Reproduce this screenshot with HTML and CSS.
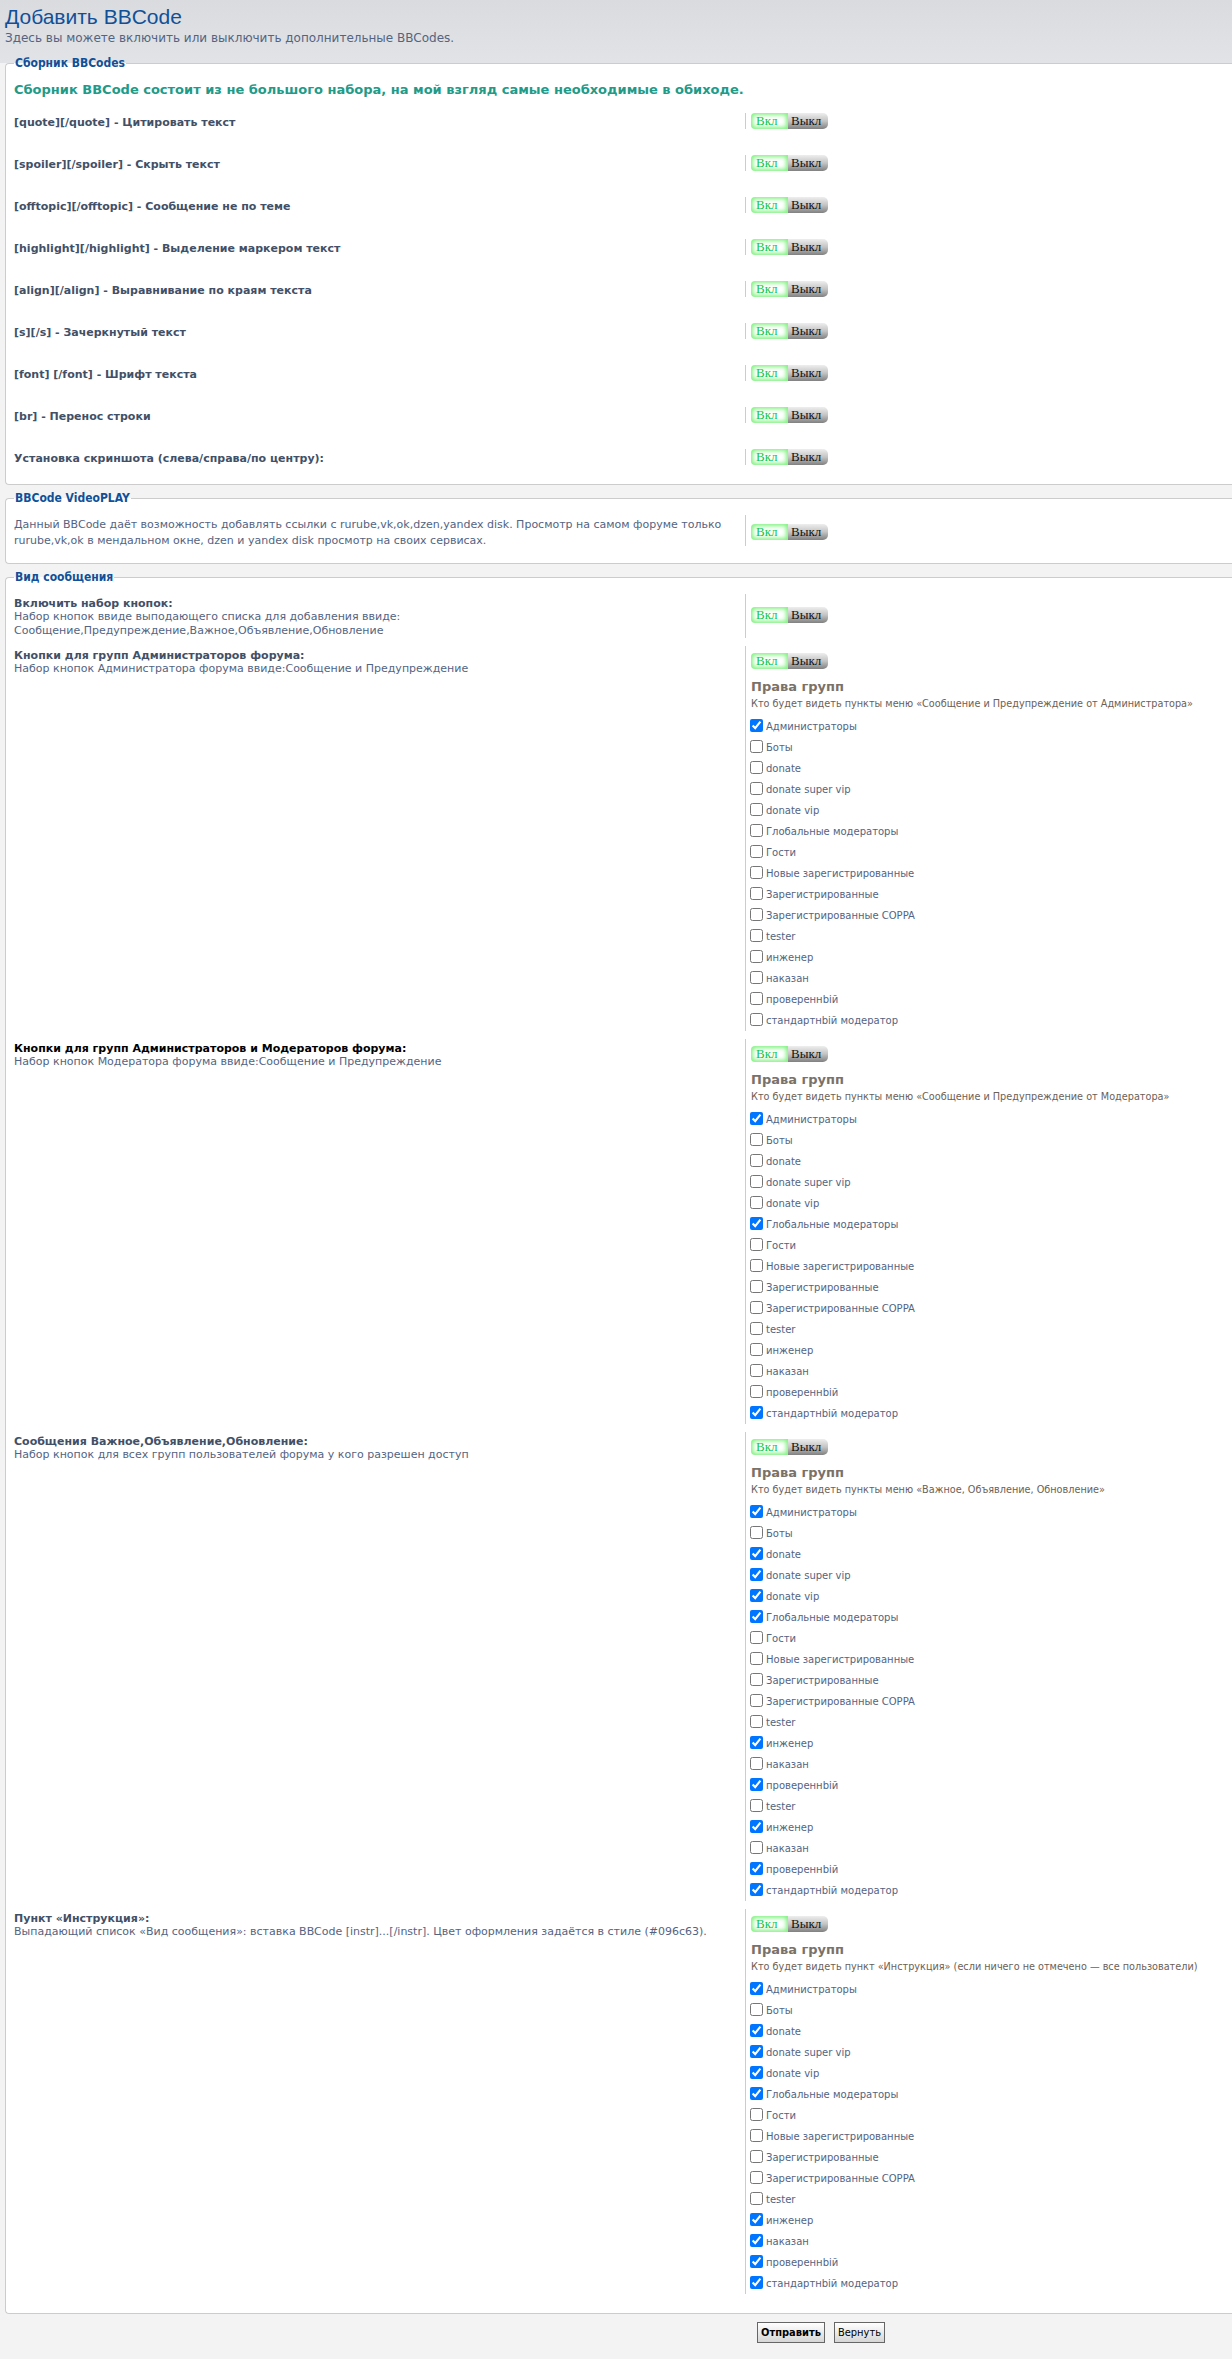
FILE: index.html
```html
<!DOCTYPE html>
<html lang="ru">
<head>
  <meta charset="UTF-8">
  <title>Добавить BBCode</title>
  <link rel="stylesheet" href="styles.css">
</head>
<body>

  <div class="head">
    <h1>Добавить BBCode</h1>
    <p>Здесь вы можете включить или выключить дополнительные BBCodes.</p>
  </div>

  <!-- Сборник -->
  <fieldset class="box box-main">
    <legend>Сборник BBCodes</legend>
    <p class="intro">Сборник BBCode состоит из не большого набора, на мой взгляд самые необходимые в обиходе.</p>

    <dl class="opt">
      <dt><label>[quote][/quote] - Цитировать текст</label></dt>
      <dd><span class="toggle"><span class="on">Вкл</span><span class="off">Выкл</span></span></dd>
    </dl>
    <dl class="opt">
      <dt><label>[spoiler][/spoiler] - Скрыть текст</label></dt>
      <dd><span class="toggle"><span class="on">Вкл</span><span class="off">Выкл</span></span></dd>
    </dl>
    <dl class="opt">
      <dt><label>[offtopic][/offtopic] - Сообщение не по теме</label></dt>
      <dd><span class="toggle"><span class="on">Вкл</span><span class="off">Выкл</span></span></dd>
    </dl>
    <dl class="opt">
      <dt><label>[highlight][/highlight] - Выделение маркером текст</label></dt>
      <dd><span class="toggle"><span class="on">Вкл</span><span class="off">Выкл</span></span></dd>
    </dl>
    <dl class="opt">
      <dt><label>[align][/align] - Выравнивание по краям текста</label></dt>
      <dd><span class="toggle"><span class="on">Вкл</span><span class="off">Выкл</span></span></dd>
    </dl>
    <dl class="opt">
      <dt><label>[s][/s] - Зачеркнутый текст</label></dt>
      <dd><span class="toggle"><span class="on">Вкл</span><span class="off">Выкл</span></span></dd>
    </dl>
    <dl class="opt">
      <dt><label>[font] [/font] - Шрифт текста</label></dt>
      <dd><span class="toggle"><span class="on">Вкл</span><span class="off">Выкл</span></span></dd>
    </dl>
    <dl class="opt">
      <dt><label>[br] - Перенос строки</label></dt>
      <dd><span class="toggle"><span class="on">Вкл</span><span class="off">Выкл</span></span></dd>
    </dl>
    <dl class="opt">
      <dt><label>Установка скриншота (слева/справа/по центру):</label></dt>
      <dd><span class="toggle"><span class="on">Вкл</span><span class="off">Выкл</span></span></dd>
    </dl>
  </fieldset>

  <!-- VideoPLAY -->
  <fieldset class="box box-video">
    <legend>BBCode VideoPLAY</legend>
    <dl class="vrow">
      <dt><span class="desc">Данный BBCode даёт возможность добавлять ссылки с rurube,vk,ok,dzen,yandex disk. Просмотр на самом форуме только rurube,vk,ok в мендальном окне, dzen и yandex disk просмотр на своих сервисах.</span></dt>
      <dd><span class="toggle"><span class="on">Вкл</span><span class="off">Выкл</span></span></dd>
    </dl>
  </fieldset>

  <!-- Вид сообщения -->
  <fieldset class="box box-msg">
    <legend>Вид сообщения</legend>

    <dl class="grow first">
      <dt>
        <label>Включить набор кнопок:</label>
        <span class="desc">Набор кнопок ввиде выподающего списка для добавления ввиде:<br>Сообщение,Предупреждение,Важное,Объявление,Обновление</span>
      </dt>
      <dd><span class="toggle"><span class="on">Вкл</span><span class="off">Выкл</span></span></dd>
    </dl>

    <dl class="grow">
      <dt>
        <label>Кнопки для групп Администраторов форума:</label>
        <span class="desc">Набор кнопок Администратора форума ввиде:Сообщение и Предупреждение</span>
      </dt>
      <dd>
        <span class="toggle"><span class="on">Вкл</span><span class="off">Выкл</span></span>
        <h3>Права групп</h3>
        <p class="hint">Кто будет видеть пункты меню «Сообщение и Предупреждение от Администратора»</p>
        <label class="cb"><input type="checkbox" checked>Администраторы</label>
        <label class="cb"><input type="checkbox">Боты</label>
        <label class="cb"><input type="checkbox">donate</label>
        <label class="cb"><input type="checkbox">donate super vip</label>
        <label class="cb"><input type="checkbox">donate vip</label>
        <label class="cb"><input type="checkbox">Глобальные модераторы</label>
        <label class="cb"><input type="checkbox">Гости</label>
        <label class="cb"><input type="checkbox">Новые зарегистрированные</label>
        <label class="cb"><input type="checkbox">Зарегистрированные</label>
        <label class="cb"><input type="checkbox">Зарегистрированные COPPA</label>
        <label class="cb"><input type="checkbox">tester</label>
        <label class="cb"><input type="checkbox">инженер</label>
        <label class="cb"><input type="checkbox">наказан</label>
        <label class="cb"><input type="checkbox">провереннbiй</label>
        <label class="cb"><input type="checkbox">стандартнbiй модератор</label>
      </dd>
    </dl>

    <dl class="grow">
      <dt>
        <label class="dark">Кнопки для групп Администраторов и Модераторов форума:</label>
        <span class="desc">Набор кнопок Модератора форума ввиде:Сообщение и Предупреждение</span>
      </dt>
      <dd>
        <span class="toggle"><span class="on">Вкл</span><span class="off">Выкл</span></span>
        <h3>Права групп</h3>
        <p class="hint">Кто будет видеть пункты меню «Сообщение и Предупреждение от Модератора»</p>
        <label class="cb"><input type="checkbox" checked>Администраторы</label>
        <label class="cb"><input type="checkbox">Боты</label>
        <label class="cb"><input type="checkbox">donate</label>
        <label class="cb"><input type="checkbox">donate super vip</label>
        <label class="cb"><input type="checkbox">donate vip</label>
        <label class="cb"><input type="checkbox" checked>Глобальные модераторы</label>
        <label class="cb"><input type="checkbox">Гости</label>
        <label class="cb"><input type="checkbox">Новые зарегистрированные</label>
        <label class="cb"><input type="checkbox">Зарегистрированные</label>
        <label class="cb"><input type="checkbox">Зарегистрированные COPPA</label>
        <label class="cb"><input type="checkbox">tester</label>
        <label class="cb"><input type="checkbox">инженер</label>
        <label class="cb"><input type="checkbox">наказан</label>
        <label class="cb"><input type="checkbox">провереннbiй</label>
        <label class="cb"><input type="checkbox" checked>стандартнbiй модератор</label>
      </dd>
    </dl>

    <dl class="grow">
      <dt>
        <label>Сообщения Важное,Объявление,Обновление:</label>
        <span class="desc">Набор кнопок для всех групп пользователей форума у кого разрешен доступ</span>
      </dt>
      <dd>
        <span class="toggle"><span class="on">Вкл</span><span class="off">Выкл</span></span>
        <h3>Права групп</h3>
        <p class="hint">Кто будет видеть пункты меню «Важное, Объявление, Обновление»</p>
        <label class="cb"><input type="checkbox" checked>Администраторы</label>
        <label class="cb"><input type="checkbox">Боты</label>
        <label class="cb"><input type="checkbox" checked>donate</label>
        <label class="cb"><input type="checkbox" checked>donate super vip</label>
        <label class="cb"><input type="checkbox" checked>donate vip</label>
        <label class="cb"><input type="checkbox" checked>Глобальные модераторы</label>
        <label class="cb"><input type="checkbox">Гости</label>
        <label class="cb"><input type="checkbox">Новые зарегистрированные</label>
        <label class="cb"><input type="checkbox">Зарегистрированные</label>
        <label class="cb"><input type="checkbox">Зарегистрированные COPPA</label>
        <label class="cb"><input type="checkbox">tester</label>
        <label class="cb"><input type="checkbox" checked>инженер</label>
        <label class="cb"><input type="checkbox">наказан</label>
        <label class="cb"><input type="checkbox" checked>провереннbiй</label>
        <label class="cb"><input type="checkbox">tester</label>
        <label class="cb"><input type="checkbox" checked>инженер</label>
        <label class="cb"><input type="checkbox">наказан</label>
        <label class="cb"><input type="checkbox" checked>провереннbiй</label>
        <label class="cb"><input type="checkbox" checked>стандартнbiй модератор</label>
      </dd>
    </dl>

    <dl class="grow">
      <dt>
        <label>Пункт «Инструкция»:</label>
        <span class="desc">Выпадающий список «Вид сообщения»: вставка BBCode [instr]...[/instr]. Цвет оформления задаётся в стиле (#096c63).</span>
      </dt>
      <dd>
        <span class="toggle"><span class="on">Вкл</span><span class="off">Выкл</span></span>
        <h3>Права групп</h3>
        <p class="hint">Кто будет видеть пункт «Инструкция» (если ничего не отмечено — все пользователи)</p>
        <label class="cb"><input type="checkbox" checked>Администраторы</label>
        <label class="cb"><input type="checkbox">Боты</label>
        <label class="cb"><input type="checkbox" checked>donate</label>
        <label class="cb"><input type="checkbox" checked>donate super vip</label>
        <label class="cb"><input type="checkbox" checked>donate vip</label>
        <label class="cb"><input type="checkbox" checked>Глобальные модераторы</label>
        <label class="cb"><input type="checkbox">Гости</label>
        <label class="cb"><input type="checkbox">Новые зарегистрированные</label>
        <label class="cb"><input type="checkbox">Зарегистрированные</label>
        <label class="cb"><input type="checkbox">Зарегистрированные COPPA</label>
        <label class="cb"><input type="checkbox">tester</label>
        <label class="cb"><input type="checkbox" checked>инженер</label>
        <label class="cb"><input type="checkbox" checked>наказан</label>
        <label class="cb"><input type="checkbox" checked>провереннbiй</label>
        <label class="cb"><input type="checkbox" checked>стандартнbiй модератор</label>
      </dd>
    </dl>
  </fieldset>

  <div class="buttons">
    <button class="btn btn-main">Отправить</button>
    <button class="btn">Вернуть</button>
  </div>

</body>
</html>
```

FILE: styles.css
```css
body {
  margin: 0;
  font-family: "DejaVu Sans", Verdana, sans-serif;
  background: linear-gradient(to bottom, #d9dbdf 0, #e1e3e6 63px, #f3f3f3 63px);
}

/* шапка */
.head {
  height: 56px;
  box-sizing: border-box;
  padding: 4px 5px 0;
}

.head h1 {
  margin: 0;
  font-family: "Liberation Sans", Arial, sans-serif;
  font-size: 21px;
  line-height: 26px;
  font-weight: normal;
  color: #115098;
}

.head p {
  margin: 1px 0 0;
  font-size: 12px;
  line-height: 15px;
  color: #536482;
}

/* блоки */
.box {
  margin: 0 0 6px 5px;
  padding: 0 0 19px 8px;
  border: 1px solid #ccc;
  border-right: 0;
  border-radius: 4px 0 0 4px;
  background: #fff;
  min-width: 0;
}

.box legend {
  padding: 0 1px;
  font-family: "DejaVu Sans Condensed", "DejaVu Sans", sans-serif;
  font-stretch: condensed;
  font-size: 12px;
  line-height: 14px;
  font-weight: bold;
  color: #115098;
}

.box-video {
  padding-bottom: 14px;
}

.box-msg {
  padding-bottom: 19px;
}

.intro {
  margin: 12px 0 15px;
  font-size: 13px;
  line-height: 16px;
  font-weight: bold;
  color: #229a88;
}

dl {
  display: flex;
  margin: 0;
}

dt {
  flex: 0 0 731px;
}

dd {
  margin: 0;
  padding-left: 5px;
  border-left: 1px solid #ccc;
}

dt label {
  display: block;
  font-size: 11px;
  line-height: 12px;
  font-weight: bold;
  color: #425067;
}

dt label.dark {
  color: #000;
}

.desc {
  display: block;
  font-size: 11px;
  line-height: 14px;
  color: #536482;
}

/* первый блок: короткие строки */
.opt {
  align-items: center;
}

.opt + .opt {
  margin-top: 26px;
}

.opt dt {
  padding-top: 3px;
}

.opt dd {
  display: flex;
}

/* VideoPLAY */
.vrow {
  margin-top: 10px;
  align-items: flex-start;
}

.vrow dt {
  padding-top: 2px;
}

.vrow .desc {
  line-height: 16px;
}

.vrow dd {
  padding-top: 6px;
  padding-bottom: 6px;
}

/* Вид сообщения */
.grow {
  margin-top: 8px;
}

.grow.first {
  margin-top: 10px;
}

.grow dt {
  padding-top: 4px;
}

.grow dd {
  padding-top: 4px;
}

.grow.first dd {
  padding-top: 10px;
}

.grow h3 {
  margin: 9px 0 0;
  font-size: 13px;
  line-height: 18px;
  color: #7a7168;
}

.hint {
  margin: 1px 0 5px;
  font-size: 9.7px;
  line-height: 14px;
  color: #6b6158;
  white-space: nowrap;
}

.cb {
  display: flex;
  align-items: center;
  height: 21px;
  font-size: 10px;
  color: #536482;
}

.cb input {
  width: 13px;
  height: 13px;
  margin: 0 3px 0 -1px;
  position: relative;
  top: -1px;
}

/* переключатель Вкл/Выкл */
.toggle {
  display: inline-flex;
  height: 16px;
  font-family: "Liberation Serif", serif;
  font-size: 13px;
  line-height: 16px;
}

.toggle .on {
  width: 37px;
  box-sizing: border-box;
  padding-left: 5px;
  color: #12c447;
  background: #fff;
  box-shadow: inset 0 0 4px 2px #7ff27f;
  border-radius: 4px 0 0 4px;
}

.toggle .off {
  width: 40px;
  box-sizing: border-box;
  padding-left: 3px;
  color: #111;
  background: linear-gradient(to bottom, #eeeeee 0, #c4c4c4 50%, #808080 100%);
  border-radius: 0 5px 5px 0;
}

/* кнопки */
.buttons {
  padding: 2px 0 17px 757px;
  display: flex;
  gap: 9px;
}

.btn {
  height: 21px;
  padding: 0 3px;
  font-family: "DejaVu Sans Condensed", "DejaVu Sans", sans-serif;
  font-stretch: condensed;
  font-size: 11px;
  color: #000;
  background: linear-gradient(to bottom, #ffffff, #d6d6d6);
  border: 1px solid #666;
  border-radius: 0;
  cursor: pointer;
}

.btn-main {
  font-weight: bold;
}
```
